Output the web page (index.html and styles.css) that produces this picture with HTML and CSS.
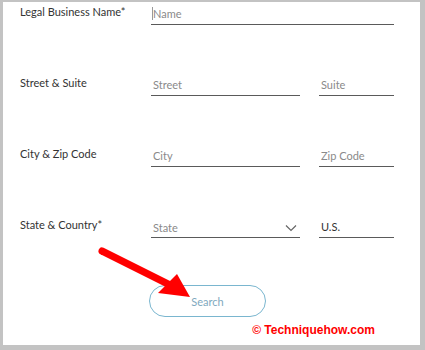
FILE: index.html
```html
<!DOCTYPE html>
<html lang="en">
  <head>
    <meta charset="UTF-8" />
    <meta name="viewport" content="width=device-width, initial-scale=1.0" />
    <title>Business Search</title>
    <link rel="stylesheet" href="styles.css">
  </head>
  <body>
    <div class="page">
      <!-- Form rows -->
      <form class="search-form">
        <div class="row">
          <label class="row-label" for="name">Legal Business Name*</label>
          <div class="fields">
            <div class="field with-caret">
              <input type="text" id="name" placeholder="Name" />
            </div>
          </div>
        </div>

        <div class="row">
          <label class="row-label" for="street">Street &amp; Suite</label>
          <div class="fields split">
            <div class="field"><input type="text" id="street" placeholder="Street" /></div>
            <div class="field"><input type="text" id="suite" placeholder="Suite" /></div>
          </div>
        </div>

        <div class="row">
          <label class="row-label" for="city">City &amp; Zip Code</label>
          <div class="fields split">
            <div class="field"><input type="text" id="city" placeholder="City" /></div>
            <div class="field"><input type="text" id="zip" placeholder="Zip Code" /></div>
          </div>
        </div>

        <div class="row">
          <label class="row-label" for="state">State &amp; Country*</label>
          <div class="fields split">
            <div class="field select">
              <span class="select-text">State</span>
              <svg class="chevron" width="12" height="8" viewBox="0 0 12 8">
                <path d="M1 1.5 L6 6.5 L11 1.5" fill="none" stroke="#666" stroke-width="1.2" />
              </svg>
            </div>
            <div class="field"><input type="text" id="country" value="U.S." /></div>
          </div>
        </div>

        <div class="actions">
          <button type="button" class="search-btn">Search</button>
        </div>
      </form>

      <div class="watermark">© Techniquehow.com</div>

      <svg class="arrow" width="200" height="310" viewBox="0 0 200 310">
        <line x1="102" y1="251" x2="168" y2="284" stroke="#f00" stroke-width="7" stroke-linecap="round" />
        <polygon points="158,293 177,274 190,297" fill="#f00" />
      </svg>
    </div>
  </body>
</html>
```

FILE: styles.css
```css
* {
  box-sizing: border-box;
}

body {
  margin: 0;
  background: #c3c3c3;
  font-family: Lato, sans-serif;
}

.page {
  margin: 2px 0 0 3px;
  width: 417px;
  height: 343px;
  background: #fff;
  padding-left: 17px;
}

.search-form {
  display: flex;
  flex-direction: column;
  gap: 48px;
}

.row {
  display: grid;
  grid-template-columns: 131px 243px;
}

.row-label {
  font-size: 11px;
  line-height: 20px;
  color: #333;
}

.fields.split {
  display: grid;
  grid-template-columns: 149px 75px;
  gap: 19px;
}

.field {
  position: relative;
  height: 23px;
  border-bottom: 1px solid #5a5a5a;
}

.field input {
  width: 100%;
  height: 22px;
  border: none;
  outline: none;
  padding: 1px 0 0 2px;
  font-family: Lato, sans-serif;
  font-size: 11px;
  color: #333;
  background: transparent;
}

.field input::placeholder {
  color: #8a8a8a;
}

.with-caret::before {
  content: "";
  position: absolute;
  left: 1px;
  top: 5px;
  width: 1px;
  height: 13px;
  background: #999;
}

.select {
  display: flex;
  align-items: center;
  justify-content: space-between;
  padding: 3px 3px 0 2px;
}

.select-text {
  font-size: 11px;
  color: #8a8a8a;
}

.actions {
  margin-top: -1px;
  padding-left: 129px;
}

.search-btn {
  width: 117px;
  height: 32px;
  border: 1px solid #7ab6cf;
  border-radius: 16px;
  background: #fff;
  color: #7fa9be;
  font-family: Lato, sans-serif;
  font-size: 11px;
  cursor: pointer;
}

.watermark {
  text-align: right;
  padding-right: 45px;
  margin-top: 6px;
  font-family: "Liberation Sans", sans-serif;
  font-weight: bold;
  font-size: 12px;
  color: #f00;
}

.arrow {
  position: absolute;
  left: 0;
  top: 0;
  pointer-events: none;
}
```
